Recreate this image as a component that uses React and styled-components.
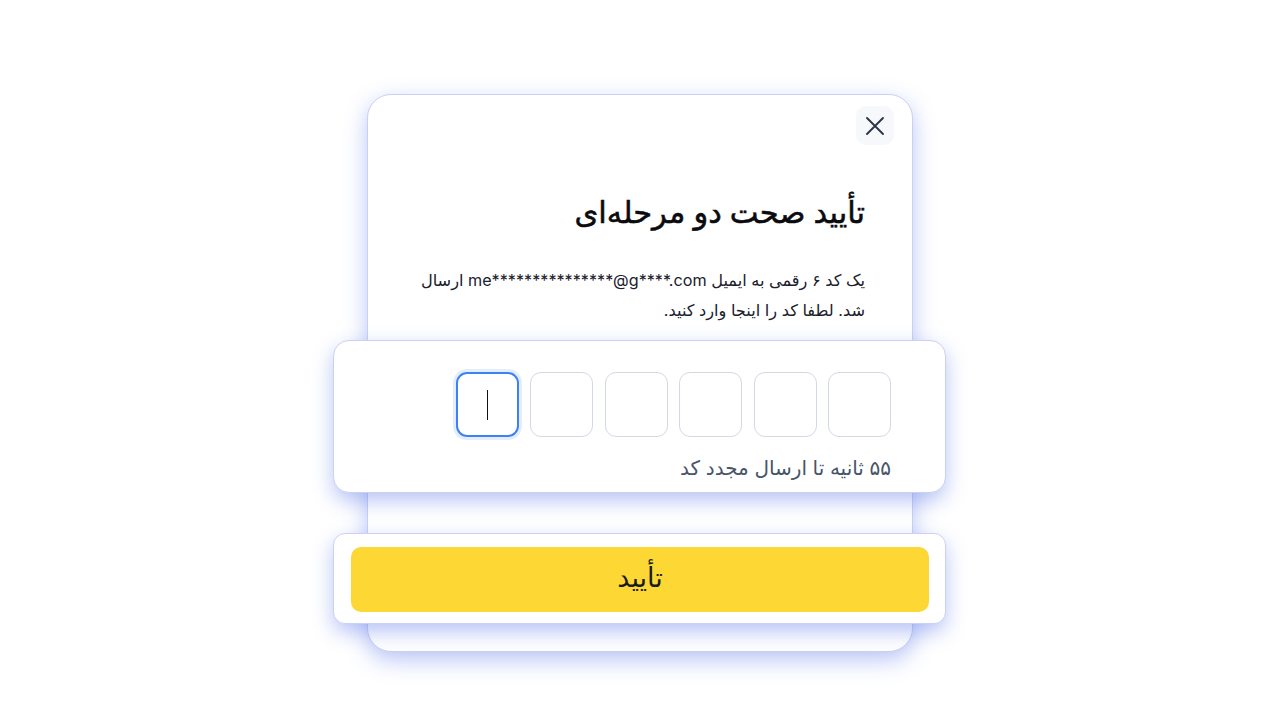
import React from 'react';
import styled, { createGlobalStyle } from 'styled-components';

const GlobalStyle = createGlobalStyle`
  html, body {
    margin: 0;
    padding: 0;
    background: #ffffff;
  }
  body {
    font-family: "Inter", "Noto Sans", "DejaVu Sans", sans-serif;
  }
`

const Page = styled.div`
  width: 1280px;
  height: 720px;
  display: flex;
  justify-content: center;
  padding-top: 94px;
  box-sizing: border-box;
`

const Card = styled.div`
  width: 546px;
  height: 558px;
  box-sizing: border-box;
  padding: 11px 18px 28px;
  background: #ffffff;
  border: 1px solid #c7d1f6;
  border-radius: 24px;
  box-shadow: 0 8px 22px rgba(72, 102, 230, 0.38);
  display: flex;
  flex-direction: column;
`

const TopBar = styled.div`
  display: flex;
  justify-content: flex-start;
`

const CloseBtn = styled.button`
  width: 38px;
  height: 39px;
  border: none;
  border-radius: 10px;
  background: #f7f8fb;
  color: #2b3548;
  display: flex;
  align-items: center;
  justify-content: center;
  padding: 0;
  cursor: pointer;
`

const Body = styled.div`
  padding: 0 29px;
`

const Title = styled.h2`
  margin: 47px 0 0;
  font-size: 30.5px;
  line-height: 40px;
  font-weight: 500;
  color: #0b0b0f;
  -webkit-text-stroke: 0.55px #0b0b0f;
`

const Desc = styled.p`
  margin: 33px 0 0;
  font-size: 16.2px;
  line-height: 30px;
  color: #1a202c;
`

const Panel = styled.div`
  margin: ${p => p.$top}px -52px 0 -53px;
  background: #ffffff;
  border: 1px solid #c9d2f4;
  border-radius: ${p => p.$radius}px;
  box-shadow: 0 8px 20px rgba(72, 102, 230, 0.38);
  padding: ${p => p.$pad};
`

const CodeRow = styled.div`
  direction: ltr;
  display: flex;
  justify-content: flex-end;
  gap: 11.4px;
`

const CodeBox = styled.div`
  width: 63px;
  height: 65px;
  box-sizing: border-box;
  border-radius: 11px;
  border: ${p => (p.$active ? '2px solid #3b82f6' : '1.5px solid #d3d9e4')};
  box-shadow: ${p => (p.$active ? '0 0 0 3px rgba(59, 130, 246, 0.14)' : 'none')};
  display: flex;
  align-items: center;
  justify-content: center;
`

const Caret = styled.span`
  width: 1.5px;
  height: 30px;
  background: #111;
`

const Timer = styled.div`
  margin-top: 17px;
  font-size: 20px;
  line-height: 28px;
  color: #475569;
`

const Confirm = styled.button`
  width: 100%;
  height: 65px;
  border: none;
  border-radius: 10px;
  background: #fdd835;
  color: #1a1a1a;
  font-family: inherit;
  font-size: 27px;
  padding: 0 0 4px;
  cursor: pointer;
`

const XIcon = () => (
  <svg width="24" height="24" viewBox="0 0 24 24" fill="none" stroke="currentColor" strokeWidth="1.9" strokeLinecap="round">
    <path d="M4 4l16 16M20 4L4 20" />
  </svg>
)

const App = () => {
  const boxes = [0, 1, 2, 3, 4, 5];
  return (
    <>
      <GlobalStyle />
      <Page>
        <Card dir="rtl">
          <TopBar>
            <CloseBtn aria-label="بستن"><XIcon /></CloseBtn>
          </TopBar>
          <Body>
            <Title>تأیید صحت دو مرحله‌ای</Title>
            <Desc>یک کد ۶ رقمی به ایمیل me***************@g****.com ارسال شد. لطفا کد را اینجا وارد کنید.</Desc>
          </Body>
          <Panel $top={15} $radius={16} $pad="31px 54px 10px">
            <CodeRow>
              {boxes.map(i => (
                <CodeBox key={i} $active={i === 0}>
                  {i === 0 && <Caret />}
                </CodeBox>
              ))}
            </CodeRow>
            <Timer>۵۵ ثانیه تا ارسال مجدد کد</Timer>
          </Panel>
          <Panel $top={40} $radius={12} $pad="13px 16px 11px 17px">
            <Confirm>تأیید</Confirm>
          </Panel>
        </Card>
      </Page>
    </>
  );
};

export default App;
